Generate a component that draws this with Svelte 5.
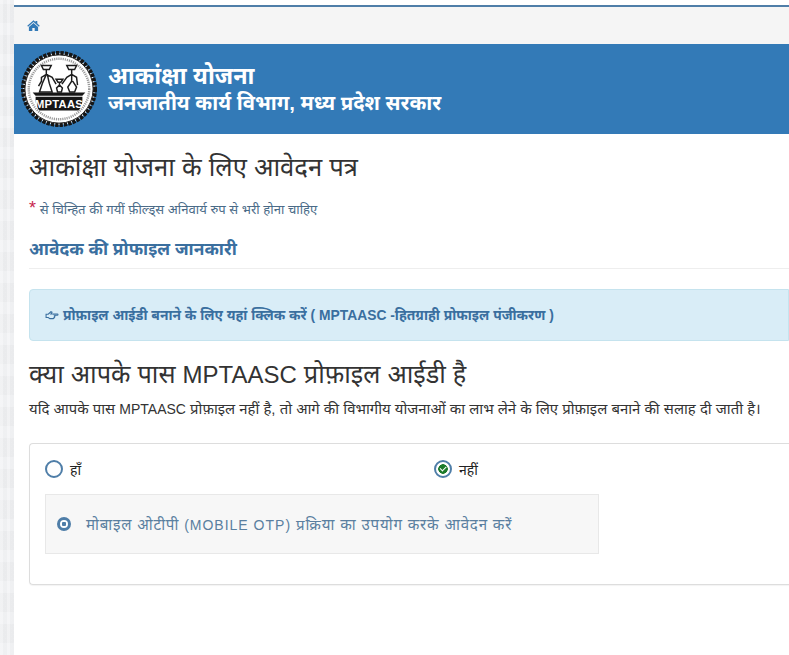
<script>
  let choice = $state('no')
</script>

<div class="page">
  <nav class="crumbs">
    <svg class="home" viewBox="0 0 24 24" aria-hidden="true">
      <path d="M12 2.500 0.500 12.300l1.500 1.800L12 5.600l10 8.500 1.500-1.800-4.500-3.800V3.500h-3.400v2z" />
      <path d="M12 7.500 3.500 14.600V22h6.300v-5.600h4.400V22h6.300v-7.400z" />
    </svg>
  </nav>

  <header class="banner">
    <svg class="logo" viewBox="0 0 80 80" aria-hidden="true">
      <circle cx="40" cy="40" r="37" fill="#fff" stroke="#161616" stroke-width="4" stroke-dasharray="3.500 1" />
      <circle cx="40" cy="40" r="35" fill="#fff" stroke="#161616" stroke-width="1" />
      <circle cx="40" cy="40" r="31" fill="none" stroke="#999" stroke-width="2.500" stroke-dasharray="1.200 1" />
      <g fill="none" stroke="#1c1c1c" stroke-width="1.500">
        <path d="M22 16h10l-2 4h-6zM27 20v5l-5 3 0 4 -3 5M27 25l6 3 4 7M27 25l-4 9-3 9h13l-3-9-2-9" />
        <path d="M48 16h10l-2 4h-6zM53 20v5l-5 3-5 7M53 25l5 3 1 8M53 25v7l-4 6 2 5h5l2-5-4-6" />
        <path d="M37 30h7l-2 3h-3zM40.500 33v3l-3 3 1 4h4l1-4-3-3" />
      </g>
      <path d="M13 43.500h54l-3 3.500H16z" fill="#161616" />
      <path d="M16 48h48v3c0 5-2 9-4 11H20c-2-2-4-6-4-11z" fill="#161616" />
      <text x="40" y="59" class="logo-text" text-anchor="middle">MPTAAS</text>
    </svg>
    <div class="titles">
      <div class="title-main">आकांक्षा योजना</div>
      <div class="title-sub">जनजातीय कार्य विभाग, मध्य प्रदेश सरकार</div>
    </div>
  </header>

  <main class="content">
    <h1>आकांक्षा योजना के लिए आवेदन पत्र</h1>
    <p class="required"><span class="star">*</span> से चिन्हित की गयीं फ़ील्ड्स अनिवार्य रुप से भरी होना चाहिए</p>
    <h2>आवेदक की प्रोफाइल जानकारी</h2>

    <div class="alert">
      <svg class="hand" viewBox="0 0 26 20" aria-hidden="true">
        <path d="M2 8.500h4l5-4.500 2 1-2 3h12c1.500 0 1.500 2.500 0 2.500h-5c1 .7.800 2-.3 2.200.7.900.2 2-.9 2.100.3 1-.4 1.900-1.400 1.900H9l-3-2H2z" />
      </svg>
      प्रोफ़ाइल आईडी बनाने के लिए यहां क्लिक करें ( MPTAASC -हितग्राही प्रोफाइल पंजीकरण )
    </div>

    <h3>क्या आपके पास <span class="latin">MPTAASC</span> प्रोफ़ाइल आईडी है</h3>
    <p class="note">यदि आपके पास <span class="latin">MPTAASC</span> प्रोफ़ाइल नहीं है, तो आगे की विभागीय योजनाओं का लाभ लेने के लिए प्रोफ़ाइल बनाने की सलाह दी जाती है।</p>

    <section class="panel">
      <div class="choices">
        <label class="choice">
          <input type="radio" name="has-id" value="yes" bind:group={choice} />
          <span class="radio" class:on={choice === 'yes'}></span>
          <span>हाँ</span>
        </label>
        <label class="choice">
          <input type="radio" name="has-id" value="no" bind:group={choice} />
          <span class="radio" class:on={choice === 'no'}></span>
          <span>नहीं</span>
        </label>
      </div>
      <div class="otp">
        <span class="dot"></span>
        <span>मोबाइल ओटीपी <span class="latin">(MOBILE OTP)</span> प्रक्रिया का उपयोग करके आवेदन करें</span>
      </div>
    </section>
  </main>
</div>

<style>
  :global(body) {
    margin: 0;
    background-color: #eff0f2;
    background-image:
      repeating-linear-gradient(90deg, rgba(255, 255, 255, 0.25) 0 3px, rgba(0, 0, 0, 0.008) 3px 7px),
      repeating-linear-gradient(0deg, rgba(255, 255, 255, 0.15) 0 12px, rgba(0, 0, 0, 0.01) 12px 31px);
    font-family: "Liberation Sans", "Noto Sans", "DejaVu Sans", sans-serif;
  }

  .page {
    margin-left: 14px;
    padding-top: 5px;
    height: 650px;
    overflow: hidden;
    background: #fff;
  }

  .crumbs {
    height: 37px;
    border-top: 2px solid #4f7ea8;
    background: #f5f5f5;
    display: flex;
    align-items: center;
    padding-left: 13px;
  }

  .home {
    width: 13px;
    height: 13px;
    fill: #337ab7;
  }

  .banner {
    height: 90px;
    background: #337ab7;
    display: flex;
    align-items: center;
    gap: 10px;
    padding-left: 6px;
    color: #fff;
  }

  .logo {
    width: 78px;
    height: 78px;
  }

  .logo-text {
    font-size: 11.500px;
    font-weight: 700;
    fill: #fff;
    letter-spacing: 0.3px;
  }

  .title-main {
    font-size: 23.400px;
    font-weight: 700;
    line-height: 28px;
  }

  .title-sub {
    font-size: 20.300px;
    font-weight: 700;
    line-height: 26px;
  }

  .content {
    padding: 0 0 0 15px;
    white-space: nowrap;
  }

  h1 {
    margin: 17px 0 0;
    font-size: 25.600px;
    font-weight: 400;
    line-height: 32px;
    color: #333;
  }

  .required {
    margin: 18px 0 0;
    font-size: 13.100px;
    line-height: 18px;
    color: #4a6b88;
  }

  .star {
    color: #c7254e;
    font-size: 18px;
    line-height: 0;
  }

  h2 {
    margin: 16px 0 0;
    padding-bottom: 5px;
    border-bottom: 1px solid #eee;
    font-size: 17.400px;
    font-weight: 700;
    line-height: 28px;
    color: #3a6f9f;
  }

  .alert {
    margin-top: 20px;
    padding: 16px 15px;
    height: 18px;
    display: flex;
    align-items: center;
    gap: 4px;
    background: #d9edf7;
    border: 1px solid #c5e3ee;
    border-radius: 4px 0 0 4px;
    font-size: 13.850px;
    font-weight: 700;
    line-height: 18px;
    color: #3a6f9f;
  }

  .hand {
    width: 14px;
    height: 12px;
    fill: none;
    stroke: #3a6f9f;
    stroke-width: 2;
  }

  h3 {
    margin: 16px 0 0;
    font-size: 25.300px;
    font-weight: 400;
    line-height: 34px;
    color: #333;
  }

  h3 .latin {
    font-size: 24px;
  }

  .note {
    margin: 8px 0 0;
    font-size: 14.900px;
    line-height: 18px;
    color: #333;
  }

  .note .latin {
    font-size: 14px;
  }

  .panel {
    margin-top: 25px;
    height: 140px;
    padding: 0 15px;
    border: 1px solid #ddd;
    border-right: none;
    border-radius: 4px 0 0 4px;
    box-shadow: 0 1px 1px rgba(0, 0, 0, 0.05);
  }

  .choices {
    display: grid;
    grid-template-columns: 389px 1fr;
    height: 50px;
    align-items: center;
  }

  .choice {
    display: flex;
    align-items: center;
    gap: 7px;
    font-size: 14px;
    color: #222;
  }

  .choice input {
    position: absolute;
    opacity: 0;
  }

  .radio {
    width: 14px;
    height: 14px;
    border: 2px solid #4f7ea8;
    border-radius: 50%;
    background: #fff;
    position: relative;
  }

  .radio.on {
    background: radial-gradient(circle, #1c7a2b 0 4.500px, #fff 5px);
  }

  .radio.on::after {
    content: '';
    position: absolute;
    left: 4px;
    top: 3.500px;
    width: 5px;
    height: 2.500px;
    border-left: 1.500px solid #fff;
    border-bottom: 1.500px solid #fff;
    transform: rotate(-45deg);
  }

  .otp {
    width: 541px;
    height: 58px;
    background: #f7f7f7;
    border: 1px solid #e8e8e8;
    display: flex;
    align-items: center;
    gap: 15px;
    padding-left: 11px;
    font-size: 15.100px;
    letter-spacing: 0.800px;
    color: #5a7fa0;
  }

  .otp .latin {
    font-size: 14px;
    letter-spacing: 1px;
  }

  .dot {
    width: 8px;
    height: 8px;
    border: 3px solid #4f7ea8;
    border-radius: 50%;
    background: radial-gradient(circle, #4f7ea8 0 2px, #fff 2.500px);
  }
</style>
